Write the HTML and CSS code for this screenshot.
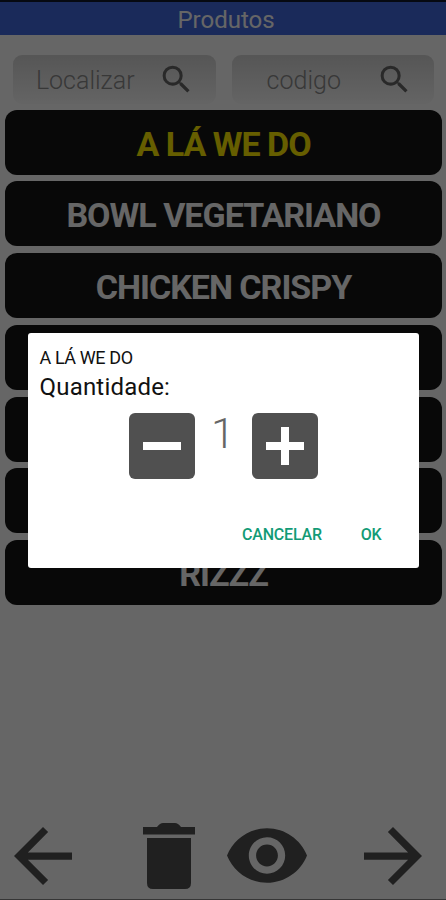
FILE: index.html
```html
<!DOCTYPE html>
<html lang="pt-BR">

<head>
    <meta charset="UTF-8" />
    <meta name="viewport" content="width=device-width, initial-scale=1.0" />
    <title>Produtos</title>
    <link rel="stylesheet" href="styles.css">
</head>

<body>
    <div class="app">
        <header class="header">Produtos</header>
        <div class="search">
            <div class="field">
                <span>Localizar</span>
                <svg viewBox="0 0 24 24"><path d="M15.5 14h-.79l-.28-.27A6.471 6.471 0 0 0 16 9.5 6.5 6.5 0 1 0 9.5 16c1.61 0 3.09-.59 4.23-1.57l.27.28v.79l5 4.99L20.49 19l-4.99-5zm-6 0C7.01 14 5 11.99 5 9.5S7.01 5 9.5 5 14 7.01 14 9.5 11.99 14 9.5 14z"/></svg>
            </div>
            <div class="field">
                <span>codigo</span>
                <svg viewBox="0 0 24 24"><path d="M15.5 14h-.79l-.28-.27A6.471 6.471 0 0 0 16 9.5 6.5 6.5 0 1 0 9.5 16c1.61 0 3.09-.59 4.23-1.57l.27.28v.79l5 4.99L20.49 19l-4.99-5zm-6 0C7.01 14 5 11.99 5 9.5S7.01 5 9.5 5 14 7.01 14 9.5 11.99 14 9.5 14z"/></svg>
            </div>
        </div>
        <ul class="list">
            <li class="item selected">A LÁ WE DO</li>
            <li class="item">BOWL VEGETARIANO</li>
            <li class="item">CHICKEN CRISPY</li>
            <li class="item"></li>
            <li class="item"></li>
            <li class="item"></li>
            <li class="item">RIZZZ</li>
        </ul>
        <nav class="actions">
            <svg class="arrow" viewBox="4 4 16 16"><path d="M20 11H7.83l5.59-5.59L12 4l-8 8 8 8 1.41-1.41L7.83 13H20v-2z"/></svg>
            <svg class="trash" viewBox="0 0 52 66"><path d="M0 4h14q3-4 6-4h12q3 0 6 4h14v7.5H0zM4 15h44v45q0 6-6 6H10q-6 0-6-6z"/></svg>
            <svg class="eye" viewBox="1 4.5 22 15"><path d="M12 4.5C7 4.5 2.73 7.61 1 12c1.73 4.39 6 7.5 11 7.5s9.27-3.11 11-7.5c-1.73-4.39-6-7.5-11-7.5zM12 17c-2.76 0-5-2.24-5-5s2.24-5 5-5 5 2.24 5 5-2.24 5-5 5zm0-8c-1.66 0-3 1.34-3 3s1.34 3 3 3 3-1.34 3-3-1.34-3-3-3z"/></svg>
            <svg class="arrow" viewBox="4 4 16 16"><path d="M12 4l-1.41 1.41L16.17 11H4v2h12.17l-5.58 5.59L12 20l8-8z"/></svg>
        </nav>
    </div>

    <div class="overlay">
        <div class="dialog">
            <div class="product">A LÁ WE DO</div>
            <div class="label">Quantidade:</div>
            <div class="stepper">
                <button class="step"><svg viewBox="0 0 66 66"><path d="M14 29h38v8H14z"/></svg></button>
                <span class="qty">1</span>
                <button class="step"><svg viewBox="0 0 66 66"><path d="M14 29h15V14h8v15h15v8H37v15h-8V37H14z"/></svg></button>
            </div>
            <div class="buttons">
                <button>CANCELAR</button>
                <button>OK</button>
            </div>
        </div>
    </div>
</body>

</html>
```
FILE: styles.css
```css
* {
    box-sizing: border-box;
}

body {
    margin: 0;
    font-family: Roboto, sans-serif;
    background: #fff;
}

button {
    border: none;
    background: none;
    padding: 0;
    font-family: inherit;
    cursor: pointer;
}

.app {
    height: 900px;
    display: flex;
    flex-direction: column;
    overflow: hidden;
    border-bottom: 1px solid #888;
}

.header {
    height: 35px;
    border-top: 2px solid #10182c;
    background: #4169e1;
    color: #fff;
    font-size: 24px;
    line-height: 36px;
    text-align: center;
    padding-left: 6px;
}

.search {
    display: flex;
    gap: 16px;
    padding: 20px 12px 0 13px;
}

.field {
    flex: 1;
    height: 49px;
    display: flex;
    align-items: center;
    border-radius: 9px;
    background: linear-gradient(#d6d6d6, #fbfbfb);
    color: #8c8c8c;
    font-size: 25px;
    font-weight: 300;
    padding-right: 21px;
}

.field span {
    flex: 1;
    text-align: center;
    padding-top: 2px;
}

.field svg {
    width: 37px;
    height: 37px;
    fill: #666;
}

.list {
    list-style: none;
    margin: 5.5px 4px 0 5px;
    padding: 0;
    display: flex;
    flex-direction: column;
    gap: 6.75px;
}

.item {
    height: 65px;
    border-radius: 12px;
    background: #141414;
    color: #fff;
    font-size: 34px;
    font-weight: bold;
    letter-spacing: -1px;
    line-height: 68px;
    text-align: center;
}

.item.selected {
    color: #ffeb00;
}

.actions {
    margin-top: auto;
    height: 87px;
    padding: 0 24px 0 14px;
    display: flex;
    align-items: center;
    fill: #505050;
}

.arrow {
    width: 58px;
    height: 58px;
}

.trash {
    width: 52px;
    height: 66px;
    margin-left: 71px;
}

.eye {
    width: 80px;
    height: 55px;
    margin: 0 auto 0 32px;
}

.overlay {
    position: fixed;
    inset: 0;
    background: rgba(0, 0, 0, 0.6);
    display: flex;
    justify-content: center;
    align-items: center;
}

.dialog {
    width: 391px;
    height: 235px;
    border-radius: 3px;
    background: #fff;
    padding: 14px 12px 0;
    color: #111;
}

.product {
    font-size: 18px;
    letter-spacing: -0.4px;
    line-height: 22px;
}

.label {
    font-size: 24px;
    letter-spacing: 0.2px;
    line-height: 37px;
}

.stepper {
    display: flex;
    justify-content: center;
    margin-top: 7px;
}

.step {
    width: 66px;
    height: 66px;
    border-radius: 6px;
    background: #505050;
}

.step svg {
    display: block;
    fill: #fff;
}

.qty {
    width: 57px;
    color: #666;
    font-size: 43px;
    font-weight: 300;
    line-height: 40px;
    text-align: center;
}

.buttons {
    display: flex;
    justify-content: flex-end;
    gap: 39px;
    margin: 44px 25px 0 0;
}

.buttons button {
    color: #129b76;
    font-size: 16px;
    font-weight: 500;
    letter-spacing: -0.2px;
    line-height: 24px;
}
```
